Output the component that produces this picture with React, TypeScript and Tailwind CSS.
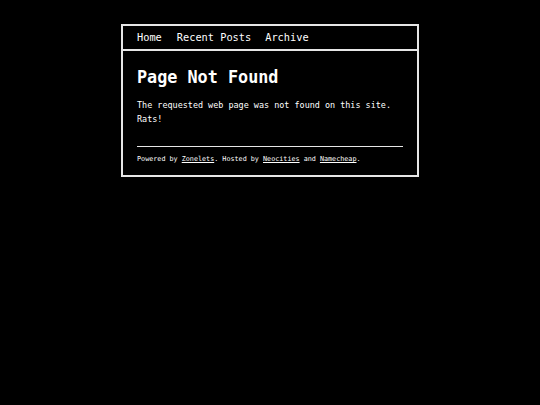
import React from "react";

export default function App() {
  const mono = { fontFamily: '"DejaVu Sans Mono", "Liberation Mono", monospace' };
  return (
    <div className="min-h-[405px] w-full bg-black text-white" style={mono}>
      <div className="pt-[24px]">
        <div className="mx-auto w-[298px] border-2 border-[#e6e6e6]">
          <nav className="flex h-[25px] items-center border-b-2 border-[#e6e6e6] px-[14px] text-[10.3px] leading-none">
            <a className="mr-[15px]">Home</a>
            <a className="mr-[14px]">Recent Posts</a>
            <a>Archive</a>
          </nav>
          <main className="px-[14px] pt-[16px] pb-[11px]">
            <h1 className="text-[16.8px] font-bold leading-[20px]">Page Not Found</h1>
            <p className="mt-[11px] text-[8.45px] leading-[14px]">
              The requested web page was not found on this site.
              <br />
              Rats!
            </p>
            <hr className="mt-[20px] border-t border-[#e6e6e6]" />
            <footer className="mt-[7px] text-[6.75px] leading-[10px]">
              Powered by <a className="underline">Zonelets</a>. Hosted by{" "}
              <a className="underline">Neocities</a> and{" "}
              <a className="underline">Namecheap</a>.
            </footer>
          </main>
        </div>
      </div>
    </div>
  );
}
